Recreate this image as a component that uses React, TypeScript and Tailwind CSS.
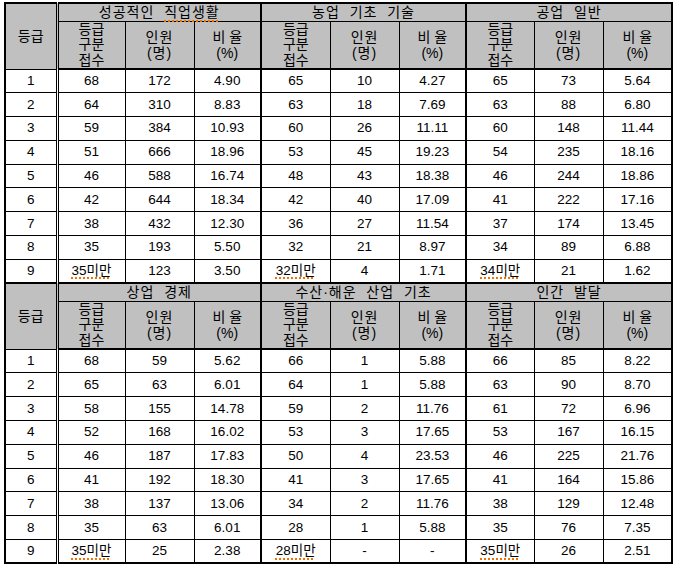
type Cell = string;
type Row = [Cell, Cell, Cell, Cell, Cell, Cell, Cell, Cell, Cell];

type Section = {
  titles: [string, string, string];
  rows: Row[];
};

const sections: Section[] = [
  {
    titles: ["성공적인 직업생활", "농업 기초 기술", "공업 일반"],
    rows: [
      ["68", "172", "4.90", "65", "10", "4.27", "65", "73", "5.64"],
      ["64", "310", "8.83", "63", "18", "7.69", "63", "88", "6.80"],
      ["59", "384", "10.93", "60", "26", "11.11", "60", "148", "11.44"],
      ["51", "666", "18.96", "53", "45", "19.23", "54", "235", "18.16"],
      ["46", "588", "16.74", "48", "43", "18.38", "46", "244", "18.86"],
      ["42", "644", "18.34", "42", "40", "17.09", "41", "222", "17.16"],
      ["38", "432", "12.30", "36", "27", "11.54", "37", "174", "13.45"],
      ["35", "193", "5.50", "32", "21", "8.97", "34", "89", "6.88"],
      ["35미만", "123", "3.50", "32미만", "4", "1.71", "34미만", "21", "1.62"],
    ],
  },
  {
    titles: ["상업 경제", "수산·해운 산업 기초", "인간 발달"],
    rows: [
      ["68", "59", "5.62", "66", "1", "5.88", "66", "85", "8.22"],
      ["65", "63", "6.01", "64", "1", "5.88", "63", "90", "8.70"],
      ["58", "155", "14.78", "59", "2", "11.76", "61", "72", "6.96"],
      ["52", "168", "16.02", "53", "3", "17.65", "53", "167", "16.15"],
      ["46", "187", "17.83", "50", "4", "23.53", "46", "225", "21.76"],
      ["41", "192", "18.30", "41", "3", "17.65", "41", "164", "15.86"],
      ["38", "137", "13.06", "34", "2", "11.76", "38", "129", "12.48"],
      ["35", "63", "6.01", "28", "1", "5.88", "35", "76", "7.35"],
      ["35미만", "25", "2.38", "28미만", "-", "-", "35미만", "26", "2.51"],
    ],
  },
];

// spell-check squiggle seen under some words in the source document
function Squiggle({ children }: { children: string }) {
  return (
    <span className="underline decoration-dotted decoration-[#f07000] decoration-[1.5px] underline-offset-[3px]">
      {children}
    </span>
  );
}

function Title({ text }: { text: string }) {
  if (text === "성공적인 직업생활") {
    return (
      <>
        성공적인&nbsp; <Squiggle>직업생활</Squiggle>
      </>
    );
  }
  return <>{text.replace(/ /g, "\u00a0 ")}</>;
}

function Value({ v }: { v: string }) {
  if (v.endsWith("미만")) return <Squiggle>{v}</Squiggle>;
  return <>{v}</>;
}

function SectionRows({ section, first }: { section: Section; first: boolean }) {
  const top = first ? "" : "border-t-2";
  return (
    <>
      <tr className="h-[18px] bg-[#c0c0c0]">
        <td
          rowSpan={2}
          className={`border border-black border-r-[3px] border-r-black border-double text-center text-[14px] ${top}`}
        >
          등급
        </td>
        {section.titles.map((t) => (
          <td
            key={t}
            colSpan={3}
            className={`border border-black border-l-2 text-center text-[14px] tracking-[1px] leading-[16px] ${top}`}
          >
            <Title text={t} />
          </td>
        ))}
      </tr>
      <tr className="h-[48px] bg-[#c0c0c0]">
        {[0, 1, 2].map((g) => (
          <>
            <td
              key={`a${g}`}
              className="border border-black border-l-2 border-b-2 text-center text-[14px] leading-[15.5px] align-middle"
            >
              등급
              <br />
              구분
              <br />
              접수
            </td>
            <td
              key={`b${g}`}
              className="border border-black border-b-2 text-center text-[14px] leading-[16px] tracking-[1px]"
            >
              인원
              <br />(명)
            </td>
            <td
              key={`c${g}`}
              className="border border-black border-b-2 text-center text-[14px] leading-[16px]"
            >
              비&nbsp;율
              <br />
              (%)
            </td>
          </>
        ))}
      </tr>
      {section.rows.map((r, i) => (
        <tr key={i} className="h-[23.8px] bg-white">
          <td className="border border-black border-r-[3px] border-r-black border-double text-center">
            {i + 1}
          </td>
          {r.map((v, j) => (
            <td
              key={j}
              className={`border border-black text-center ${j % 3 === 0 ? "border-l-2" : ""}`}
            >
              <Value v={v} />
            </td>
          ))}
        </tr>
      ))}
    </>
  );
}

export default function App() {
  const widths = [52, 68, 69, 67, 69, 69, 67, 68, 69, 69];
  return (
    <div className="bg-white w-[682px] h-[565px] pl-[4px] pt-[2px] font-['Liberation_Sans','Noto_Sans_CJK_KR',sans-serif] text-[13.5px] text-black">
      <table className="table-fixed border-collapse border-2 border-black w-[669px]">
        <colgroup>
          {widths.map((w, i) => (
            <col key={i} style={{ width: w }} />
          ))}
        </colgroup>
        <tbody>
          {sections.map((s, i) => (
            <SectionRows key={i} section={s} first={i === 0} />
          ))}
        </tbody>
      </table>
    </div>
  );
}
